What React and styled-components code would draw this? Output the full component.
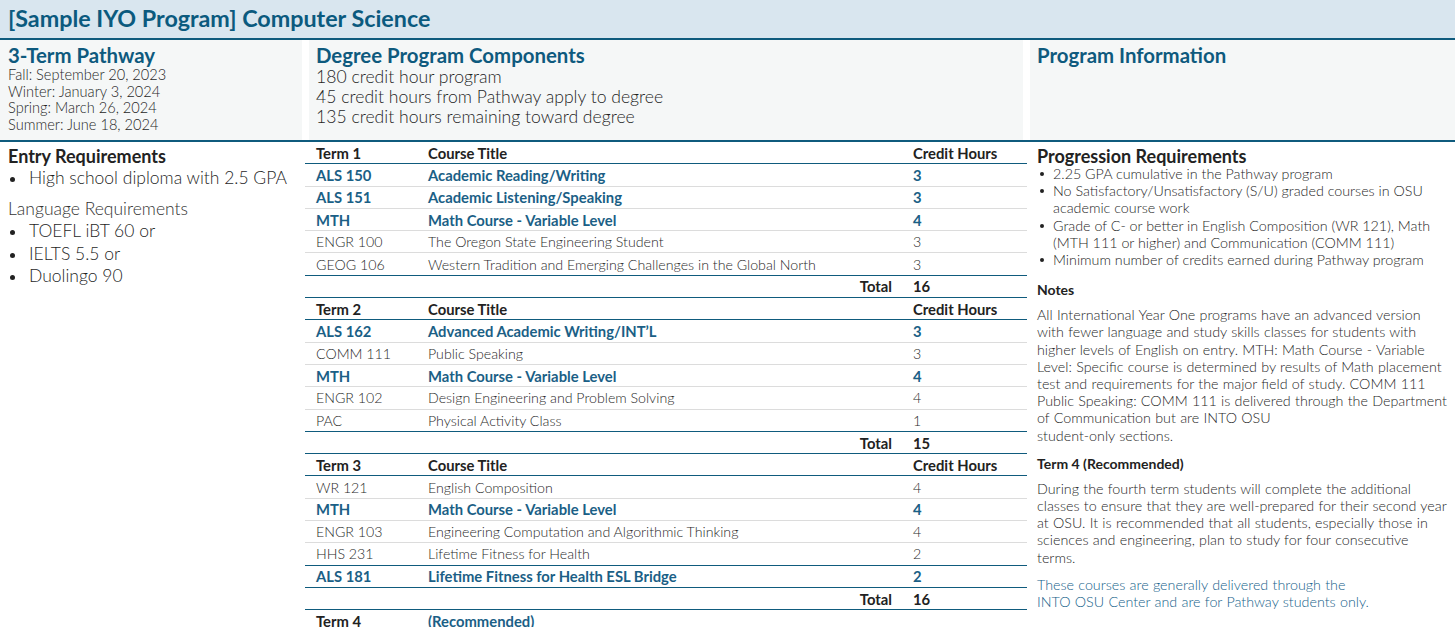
import React from "react";
import styled, { createGlobalStyle } from "styled-components";

const Global = createGlobalStyle`
  html, body { margin: 0; padding: 0; background: #fff; }
  body { font-family: Lato, "Open Sans", sans-serif; color: #222; }
  * { box-sizing: border-box; }
`;

const HEAD = `Lato, "Noto Sans", sans-serif`;
const TEAL = "#0f5b7d";
const BLUE = "#1b5f86";
const BODYW = 300;
const INK = "#1f1f1f";

const Page = styled.div`
  width: 1455px;
`;

const TopBar = styled.header`
  height: 40px;
  background: #d9e6ef;
  border-bottom: 2px solid ${TEAL};
  padding: 3px 8px 0;
`;

const Title = styled.h1`
  margin: 0;
  font-family: ${HEAD};
  font-weight: 700;
  font-size: 23.3px;
  line-height: 30px;
  color: #0b5a7e;
`;

const Summary = styled.section`
  display: grid;
  grid-template-columns: 302px 714px 1fr;
  column-gap: 7px;
  height: 102px;
  border-bottom: 2px solid ${TEAL};
`;

const SummaryCol = styled.div`
  background: #f5f7f7;
  padding: ${(p) => (p.$first ? "4px 8px" : "4px 7px")};
`;

const SectionTitle = styled.h2`
  margin: 0;
  font-family: ${HEAD};
  font-weight: 700;
  font-size: 20.4px;
  line-height: 23px;
  color: #0e5a7e;
`;

const DateLine = styled.div`
  font-size: 14.6px;
  line-height: 16.7px;
  font-weight: ${BODYW};
  color: ${INK};
`;

const FactLine = styled.div`
  font-size: 17.6px;
  line-height: 20px;
  color: ${INK};
  font-weight: ${BODYW};
`;

const Body = styled.section`
  display: grid;
  grid-template-columns: 305px 722px 1fr;
`;

const LeftCol = styled.div`
  padding: 3px 8px;
`;

const BlockHead = styled.h3`
  margin: 0;
  font-family: ${HEAD};
  font-weight: 700;
  font-size: 18px;
  line-height: 22px;
  color: #222;
`;

const BigList = styled.ul`
  list-style: none;
  margin: 0;
  padding: 0;
`;

const BigItem = styled.li`
  position: relative;
  padding-left: 21px;
  font-size: 17.5px;
  line-height: 22.5px;
  font-weight: ${BODYW};
  color: ${INK};
  &::before {
    content: "";
    position: absolute;
    left: 2px;
    top: 10px;
    width: 5px;
    height: 5px;
    border-radius: 50%;
    background: #222;
  }
`;

const SubHead = styled.div`
  margin-top: 8px;
  font-size: 17.5px;
  line-height: 22.5px;
  font-weight: ${BODYW};
  color: #333;
`;

const TableWrap = styled.div`
  display: flex;
  flex-direction: column;
`;

const Row = styled.div`
  display: grid;
  grid-template-columns: 112px 485px 1fr;
  height: 22.3px;
  align-items: center;
  border-bottom: 1px solid ${(p) => (p.$strong ? TEAL : "#dcdcdc")};
`;

const Cell = styled.div`
  padding-left: 11px;
  white-space: nowrap;
  font-size: ${(p) => (p.$kind === "plain" ? "14.2px" : "14.8px")};
  font-family: ${(p) => (p.$kind === "plain" ? "Lato, sans-serif" : HEAD)};
  font-weight: ${(p) => (p.$kind === "plain" ? BODYW : 700)};
  color: ${(p) =>
    p.$kind === "plain" ? "#2a2a2a" : p.$kind === "accent" ? BLUE : "#222"};
  text-align: ${(p) => (p.$right ? "right" : "left")};
  padding-right: ${(p) => (p.$right ? "10px" : "0")};
`;

const RightCol = styled.div`
  padding: 3px 8px 0 10px;
`;

const SmallList = styled.ul`
  list-style: none;
  margin: -2px 0 12px;
  padding: 0;
`;

const SmallItem = styled.li`
  position: relative;
  padding-left: 16px;
  font-size: 14.3px;
  line-height: 17.2px;
  font-weight: ${BODYW};
  color: ${INK};
  &::before {
    content: "";
    position: absolute;
    left: 3px;
    top: 7px;
    width: 4px;
    height: 4px;
    border-radius: 50%;
    background: #222;
  }
`;

const NoteHead = styled.h4`
  margin: 0 0 6px;
  font-family: ${HEAD};
  font-weight: 700;
  font-size: 14px;
  line-height: 20px;
  color: #222;
`;

const Para = styled.p`
  margin: 0 0 10px;
  font-size: 14.3px;
  line-height: 17.2px;
  word-spacing: 0.4px;
  font-weight: ${BODYW};
  color: ${(p) => (p.$blue ? "#15628a" : INK)};
`;

const terms = [
  {
    name: "Term 1",
    total: 16,
    rows: [
      ["ALS 150", "Academic Reading/Writing", "3", "accent"],
      ["ALS 151", "Academic Listening/Speaking", "3", "accent"],
      ["MTH", "Math Course - Variable Level", "4", "accent"],
      ["ENGR 100", "The Oregon State Engineering Student", "3", "plain"],
      ["GEOG 106", "Western Tradition and Emerging Challenges in the Global North", "3", "plain", true],
    ],
  },
  {
    name: "Term 2",
    total: 15,
    rows: [
      ["ALS 162", "Advanced Academic Writing/INT’L", "3", "accent"],
      ["COMM 111", "Public Speaking", "3", "plain"],
      ["MTH", "Math Course - Variable Level", "4", "accent"],
      ["ENGR 102", "Design Engineering and Problem Solving", "4", "plain"],
      ["PAC", "Physical Activity Class", "1", "plain", true],
    ],
  },
  {
    name: "Term 3",
    total: 16,
    rows: [
      ["WR 121", "English Composition", "4", "plain"],
      ["MTH", "Math Course - Variable Level", "4", "accent"],
      ["ENGR 103", "Engineering Computation and Algorithmic Thinking", "4", "plain"],
      ["HHS 231", "Lifetime Fitness for Health", "2", "plain", true],
      ["ALS 181", "Lifetime Fitness for Health ESL Bridge", "2", "accent", true],
    ],
  },
];

function Term({ term }) {
  return (
    <>
      <Row $strong>
        <Cell $kind="head">{term.name}</Cell>
        <Cell $kind="head">Course Title</Cell>
        <Cell $kind="head">Credit Hours</Cell>
      </Row>
      {term.rows.map(([code, title, hrs, kind, strong], i) => (
        <Row key={i} $strong={strong}>
          <Cell $kind={kind}>{code}</Cell>
          <Cell $kind={kind}>{title}</Cell>
          <Cell $kind={kind}>{hrs}</Cell>
        </Row>
      ))}
      <Row $strong>
        <Cell $kind="head" />
        <Cell $kind="head" $right>
          Total
        </Cell>
        <Cell $kind="head">{term.total}</Cell>
      </Row>
    </>
  );
}

export default function App() {
  return (
    <Page>
      <Global />
      <TopBar>
        <Title>[Sample IYO Program] Computer Science</Title>
      </TopBar>
      <Summary>
        <SummaryCol $first>
          <SectionTitle>3-Term Pathway</SectionTitle>
          <DateLine>Fall: September 20, 2023</DateLine>
          <DateLine>Winter: January 3, 2024</DateLine>
          <DateLine>Spring: March 26, 2024</DateLine>
          <DateLine>Summer: June 18, 2024</DateLine>
        </SummaryCol>
        <SummaryCol>
          <SectionTitle>Degree Program Components</SectionTitle>
          <FactLine>180 credit hour program</FactLine>
          <FactLine>45 credit hours from Pathway apply to degree</FactLine>
          <FactLine>135 credit hours remaining toward degree</FactLine>
        </SummaryCol>
        <SummaryCol>
          <SectionTitle>Program Information</SectionTitle>
        </SummaryCol>
      </Summary>
      <Body>
        <LeftCol>
          <BlockHead>Entry Requirements</BlockHead>
          <BigList>
            <BigItem>High school diploma with 2.5 GPA</BigItem>
          </BigList>
          <SubHead>Language Requirements</SubHead>
          <BigList>
            <BigItem>TOEFL iBT 60 or</BigItem>
            <BigItem>IELTS 5.5 or</BigItem>
            <BigItem>Duolingo 90</BigItem>
          </BigList>
        </LeftCol>
        <TableWrap>
          {terms.map((t) => (
            <Term key={t.name} term={t} />
          ))}
          <Row>
            <Cell $kind="head">Term 4</Cell>
            <Cell $kind="accent">(Recommended)</Cell>
            <Cell $kind="head" />
          </Row>
        </TableWrap>
        <RightCol>
          <BlockHead>Progression Requirements</BlockHead>
          <SmallList>
            <SmallItem>2.25 GPA cumulative in the Pathway program</SmallItem>
            <SmallItem>
              No Satisfactory/Unsatisfactory (S/U) graded courses in OSU academic course work
            </SmallItem>
            <SmallItem>
              Grade of C- or better in English Composition (WR 121), Math (MTH 111 or higher) and
              Communication (COMM 111)
            </SmallItem>
            <SmallItem>Minimum number of credits earned during Pathway program</SmallItem>
          </SmallList>
          <NoteHead>Notes</NoteHead>
          <Para>
            All International Year One programs have an advanced version with fewer language and
            study skills classes for students with higher levels of English on entry. MTH: Math
            Course - Variable Level: Specific course is determined by results of Math placement test
            and requirements for the major field of study. COMM 111 Public Speaking: COMM 111 is
            delivered through the Department of Communication but are INTO OSU
            <br />
            student-only sections.
          </Para>
          <NoteHead>Term 4 (Recommended)</NoteHead>
          <Para>
            During the fourth term students will complete the additional classes to ensure that they
            are well-prepared for their second year at OSU. It is recommended that all students,
            especially those in sciences and engineering, plan to study for four consecutive terms.
          </Para>
          <Para $blue>
            These courses are generally delivered through the
            <br />
            INTO OSU Center and are for Pathway students only.
          </Para>
        </RightCol>
      </Body>
    </Page>
  );
}
